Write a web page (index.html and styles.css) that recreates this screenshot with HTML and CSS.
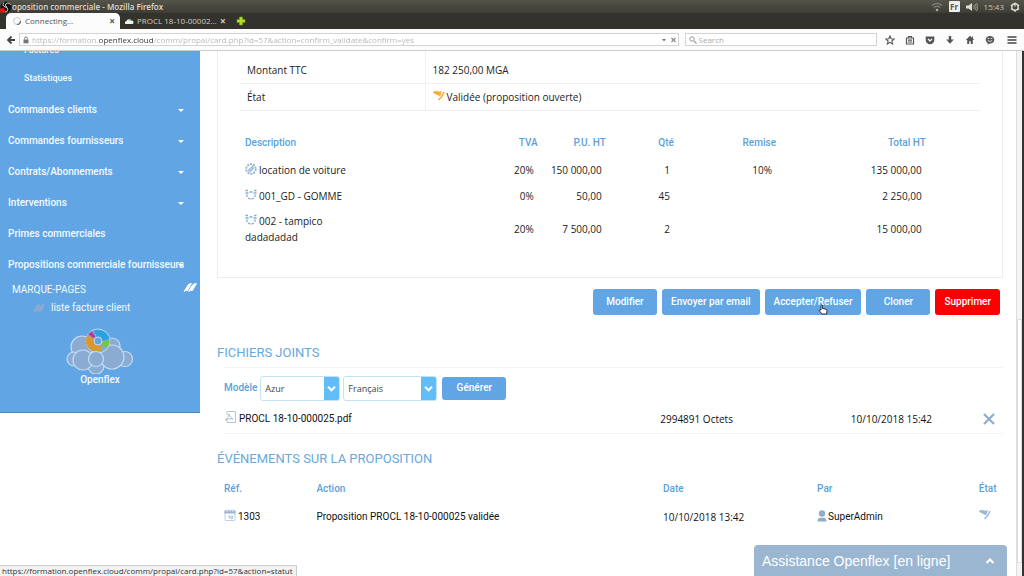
FILE: index.html
```html
<!DOCTYPE html>
<html lang="fr">
<head>
<meta charset="utf-8">
<title>Proposition commerciale</title>
<link rel="stylesheet" href="styles.css">
</head>
<body>
<header class="chrome">
  <div class="titlebar">
    <svg class="app-icon" viewBox="0 0 12 12"><circle cx="6" cy="6" r="5.5" fill="#111"/><path d="M4 1.5a2.4 2.4 0 0 0 3 4M10.500 4a2.400 2.400 0 0 0-5 1M5 11a2.400 2.400 0 0 0 .5-5" fill="none" stroke="#ccc"/><circle cx="2.500" cy="9.500" r="2.500" fill="#e11"/></svg>
    <span class="window-title">oposition commerciale - Mozilla Firefox</span>
    <div class="tray">
      <svg viewBox="0 0 12 10" width="12" height="10"><path d="M1 3.500q5-4 10 0M3 5.500q3-2.500 6 0" fill="none" stroke="#8a8983" stroke-width="1.200"/><circle cx="6" cy="8" r="1.300" fill="#aaa"/></svg>
      <span class="lang">Fr</span>
      <svg viewBox="0 0 12 10" width="12" height="10"><path d="M0 3.500h2.500L6 1v8L2.500 6.500H0z" fill="#dedcd6"/><path d="M7.500 3q1.500 2 0 4M9 2q2.500 3 0 6M10.500 1q3 4 0 8" fill="none" stroke="#aaa9a3" stroke-width=".8"/></svg>
      <time>15:43</time>
      <svg viewBox="0 0 10 10" width="10" height="10"><circle cx="5" cy="5" r="3.200" fill="none" stroke="#dedcd6" stroke-width="1.400"/><path d="M5 .5v4M.8 3l1.200.7M9.200 3L8 3.700M.8 7.500L2 6.800M9.200 7.500L8 6.800M5 8.500v1.500" stroke="#dedcd6" stroke-width="1.200"/></svg>
    </div>
  </div>
  <nav class="tabs" aria-label="Onglets">
    <div class="tab tab-active">
      <svg viewBox="0 0 10 10" width="10" height="10"><circle cx="5" cy="5" r="3.500" fill="none" stroke="#ccc"/><path d="M8.500 5A3.500 3.500 0 0 1 5 8.500" fill="none" stroke="#666" stroke-width="1.200"/></svg>
      <span class="tab-name">Connecting…</span>
      <button class="tab-close" aria-label="Fermer">×</button>
    </div>
    <div class="tab">
      <svg viewBox="0 0 10 10" width="10" height="10"><path d="M1 7.500a2 2 0 0 1 1.500-2.500 2.500 2.500 0 0 1 4.500-.5A2 2 0 0 1 9.500 6.500q0 1.500-1.500 1.500H2q-1 0-1-.5z" fill="#eef3f6"/><path d="M4 3.500a2 2 0 0 1 3 .5L5.500 5z" fill="#7cc36a"/></svg>
      <span class="tab-name">PROCL 18-10-00002…</span>
      <button class="tab-close" aria-label="Fermer">×</button>
    </div>
    <button class="tab-new" aria-label="Nouvel onglet"><svg viewBox="0 0 10 10" width="10" height="10"><path d="M3.500 1h3v2.500H9v3H6.500V9h-3V6.500H1v-3h2.500z" fill="#b5dc2a" stroke="#7fa012" stroke-width=".5"/></svg></button>
  </nav>
  <div class="navbar">
    <button class="back" aria-label="Retour"><svg viewBox="0 0 10 10" width="10" height="10"><path d="M5.500 1.500L2 5l3.500 3.500M2 5h7" fill="none" stroke="#444" stroke-width="1.800"/></svg></button>
    <div class="urlbar">
      <svg viewBox="0 0 8 8" width="8" height="8"><rect x="1.500" y="3.500" width="5" height="3.800" fill="#777"/><path d="M2.500 3.500V2.500a1.500 1.500 0 0 1 3 0v1" fill="none" stroke="#777"/></svg>
      <input class="url" aria-label="Adresse" value="https://formation.openflex.cloud/comm/propal/card.php?id=57&amp;action=confirm_validate&amp;confirm=yes">
      <svg viewBox="0 0 16 8" width="16" height="8"><path d="M1 3h4L3 5.500z" fill="#777"/><path d="M10.500 2l4 4M14.500 2l-4 4" stroke="#888" stroke-width="1.200"/></svg>
    </div>
    <div class="search">
      <svg viewBox="0 0 8 8" width="8" height="8"><circle cx="3" cy="3" r="2.200" fill="none" stroke="#999"/><path d="M4.800 4.800L7.500 7.500" stroke="#999" stroke-width="1.200"/></svg>
      <input class="search-input" aria-label="Search" placeholder="Search">
    </div>
    <div class="tools">
      <button aria-label="Favori"><svg viewBox="0 0 10 10"><path d="M5 1l1.200 2.700 3 .3-2.300 2 .7 3L5 7.400 2.400 9l.7-3L.8 4l3-.3z" fill="none" stroke="#555" stroke-width="1.100"/></svg></button>
      <button aria-label="Liste"><svg viewBox="0 0 10 10"><path d="M1.500 3h7v6h-7zM3.500 3V1.500h3V3M3 5.200h4M3 7h4" fill="none" stroke="#555" stroke-width="1.200"/></svg></button>
      <button aria-label="Pocket"><svg viewBox="0 0 10 10"><path d="M.7 1.500h8.600V5a4.300 4.300 0 0 1-8.600 0z" fill="#555"/><path d="M3 4l2 2 2-2" fill="none" stroke="#fff" stroke-width="1.200"/></svg></button>
      <button aria-label="Téléchargements"><svg viewBox="0 0 10 10"><path d="M3.800 1h2.400v3.500h2.600L5 8.800 1.200 4.500h2.600z" fill="#555"/></svg></button>
      <button aria-label="Accueil"><svg viewBox="0 0 10 10"><path d="M5 .8L.8 5h1.400v4h2V6.200h1.600V9h2V5h1.400L8 3.700V1.500H7v1.200z" fill="#555"/></svg></button>
      <button aria-label="Discussion"><svg viewBox="0 0 10 10"><path d="M5 1c2.500 0 4.300 1.500 4.300 3.700S7.500 8.500 5 8.500L2.500 9.500l.3-1.500C1.500 7.300.7 6 .7 4.700.7 2.500 2.500 1 5 1z" fill="#555"/><path d="M2.500 3.500h1.800M5.700 3.500h1.800M2.800 5.500q2.200 2 4.400 0" fill="none" stroke="#fff" stroke-width=".8"/></svg></button>
      <button aria-label="Menu" class="menu"><svg viewBox="0 0 10 10"><path d="M.5 2h9M.5 5h9M.5 8h9" stroke="#444" stroke-width="1.600"/></svg></button>
    </div>
  </div>
</header>

<div class="viewport">
  <aside class="sidebar">
    <nav class="side-nav">
      <a class="side-sub cut" href="#">Factures</a>
      <a class="side-sub" href="#">Statistiques</a>
      <a class="side-link drop" href="#">Commandes clients</a>
      <a class="side-link drop" href="#">Commandes fournisseurs</a>
      <a class="side-link drop" href="#">Contrats/Abonnements</a>
      <a class="side-link drop" href="#">Interventions</a>
      <a class="side-link" href="#">Primes commerciales</a>
      <a class="side-link drop over" href="#">Propositions commerciale fournisseurs</a>
    </nav>
    <div class="marks-head"><span>MARQUE-PAGES</span>
      <svg viewBox="0 0 14 12" width="14" height="12"><path d="M1 9.500L5 3q1-1.500 3.500-1.500L4.500 8.500Q3 8 1 9.500zM5.500 9.500L9.500 3q1-1.500 4-1.500L9.500 8.500Q7.500 8 5.500 9.500z" fill="#fff" stroke="#fff" stroke-width=".8"/></svg>
    </div>
    <a class="mark" href="#"><svg viewBox="0 0 12 10" width="12" height="10"><path d="M.5 8.500L4 2.500q1-1 3-1L4 8zM4.500 8.500l3.500-6q1-1 3.500-1L8.500 8z" fill="#8fabd0" stroke="#8fabd0" stroke-width=".6"/></svg><span>liste facture client</span></a>
    <div class="brand">
      <svg viewBox="0 0 68 46" width="68" height="46">
        <g fill="#8cabd3" stroke="#c5dcf3" stroke-width="1.200"><circle cx="16" cy="19" r="11"/><circle cx="46" cy="18" r="8"/><circle cx="30" cy="38" r="8"/><circle cx="8" cy="31" r="7"/><circle cx="59" cy="31" r="7.500"/><circle cx="17" cy="32" r="10"/><circle cx="46" cy="29" r="12"/></g>
        <circle cx="32" cy="13" r="12" fill="#78b1e4" stroke="#c5dcf3"/>
        <path d="M27.500 2.500A12 12 0 0 1 43.500 11L36 13a4 4 0 0 0-5-4z" fill="#2e9fe0"/>
        <path d="M22 6l4-2.800L29.500 9 27 10z" fill="#c0379a"/>
        <path d="M44 12a12 12 0 0 1-3 8L35 16.500l1.300-3z" fill="#7cc343"/>
        <path d="M21.500 7L28 11q-1 5 4 6.500l5 1-2 5-8 0Q16 17 21.500 7z" fill="#d69a35"/>
        <circle cx="32" cy="13" r="4" fill="#62a6e5" stroke="#c5dcf3"/>
        <circle cx="30" cy="31" r="7.500" fill="#8cabd3" stroke="#c5dcf3" stroke-width="1.200"/>
      </svg>
      <span>Openflex</span>
    </div>
  </aside>

  <main class="main">
    <section class="card">
      <table class="facts">
        <tr><th scope="row">Montant TTC</th><td>182 250,00 MGA</td></tr>
        <tr><th scope="row">État</th><td><svg class="ico" viewBox="0 0 12 11"><path d="M0 2Q2 0 4.500 1T8.500 1L7 5.500Q4 4 0 2z" fill="#f6ae2d" stroke="#f6ae2d" stroke-width=".6"/><path d="M11 1.500Q9.500 6 5.500 9.500" fill="none" stroke="#f6ae2d" stroke-width="1.600"/></svg>Validée (proposition ouverte)</td></tr>
      </table>
      <table class="lines">
        <colgroup><col class="c-desc"><col class="c-tva"><col class="c-pu"><col class="c-qty"><col class="c-rem"><col class="c-tot"></colgroup>
        <thead><tr><th>Description</th><th>TVA</th><th>P.U. HT</th><th>Qté</th><th>Remise</th><th>Total HT</th></tr></thead>
        <tbody>
          <tr><td><svg class="ico" viewBox="0 0 12 12"><circle cx="6" cy="6" r="4.800" fill="none" stroke="#8fb2d6" stroke-width="1.800" stroke-dasharray="2 1"/><path d="M3 8l5-5M4.500 9l4.500-4.500" stroke="#8fb2d6" stroke-width="1.200"/></svg>location de voiture</td><td>20%</td><td>150 000,00</td><td>1</td><td>10%</td><td>135 000,00</td></tr>
          <tr><td><svg class="ico" viewBox="0 0 12 12"><path d="M.5 1.500h2.500M9 1.500h2.500M.5 4h3M8.500 4h3M4.500 3h3M2 5.500v2.500M10 5.500v2.500M3 9l2.500 1.200M9 9l-2.500 1.200" fill="none" stroke="#86acd3" stroke-width="1.300"/></svg>001_GD - GOMME</td><td>0%</td><td>50,00</td><td>45</td><td></td><td>2 250,00</td></tr>
          <tr class="tall"><td><svg class="ico" viewBox="0 0 12 12"><path d="M.5 1.500h2.500M9 1.500h2.500M.5 4h3M8.500 4h3M4.500 3h3M2 5.500v2.500M10 5.500v2.500M3 9l2.500 1.200M9 9l-2.500 1.200" fill="none" stroke="#86acd3" stroke-width="1.300"/></svg>002 - tampico<br>dadadadad</td><td>20%</td><td>7 500,00</td><td>2</td><td></td><td>15 000,00</td></tr>
        </tbody>
      </table>
    </section>

    <div class="actions">
      <button class="btn">Modifier</button>
      <button class="btn">Envoyer par email</button>
      <button class="btn hovered">Accepter/Refuser<svg class="pointer" viewBox="0 0 10 11" width="10" height="11"><path d="M3 6V1.500q1-1 1.500 0V4.500l3.500.7q1 .2 1 1.300L8.500 10H4L1 6.500q1-1 2-.5z" fill="#fff" stroke="#222" stroke-width=".9"/></svg></button>
      <button class="btn">Cloner</button>
      <button class="btn btn-danger">Supprimer</button>
    </div>

    <h2>FICHIERS JOINTS</h2>
    <section class="files">
      <form class="generate">
        <label for="model">Modèle</label>
        <select id="model" class="pick"><option>Azur</option></select>
        <select class="pick pick-wide" aria-label="Langue"><option>Français</option></select>
        <button type="button" class="btn btn-small">Générer</button>
      </form>
      <div class="file">
        <a class="file-name" href="#"><svg class="ico" viewBox="0 0 12 12"><path d="M3 .5h8.500v11H3V9M3 .5v3.500" fill="none" stroke="#b9c3cd"/><path d="M1 9q4-2 4-6 1 4 4 5-4-1-8 1z" fill="none" stroke="#9fb3c6" stroke-width=".8"/></svg>PROCL 18-10-000025.pdf</a>
        <span class="size">2994891 Octets</span>
        <time class="stamp">10/10/2018 15:42</time>
        <button class="remove" aria-label="Supprimer le fichier"><svg viewBox="0 0 12 12" width="12" height="12"><path d="M1 1l10 10M11 1L1 11" stroke="#8fadce" stroke-width="2.200"/></svg></button>
      </div>
    </section>

    <h2>ÉVÉNEMENTS SUR LA PROPOSITION</h2>
    <table class="events">
      <colgroup><col class="e-ref"><col class="e-act"><col class="e-date"><col class="e-by"><col></colgroup>
      <thead><tr><th>Réf.</th><th>Action</th><th>Date</th><th>Par</th><th>État</th></tr></thead>
      <tbody><tr>
        <td><svg class="ico" viewBox="0 0 12 12"><rect x="1" y="1.500" width="10" height="10" rx="1" fill="#fff" stroke="#c3d0de"/><path d="M.5 1.500h11v3H.5z" fill="#9ab5d3"/><path d="M3 0v3M6 0v3M9 0v3" stroke="#dfe9f3"/><path d="M4 7h1.500v2.500M7 7h1.500v2.500H7z" fill="none" stroke="#9ab5d3" stroke-width=".8"/></svg>1303</td>
        <td>Proposition PROCL 18-10-000025 validée</td>
        <td class="narrow">10/10/2018 13:42</td>
        <td><svg class="user" viewBox="0 0 10 12" width="10" height="12"><circle cx="5" cy="3.500" r="3.200" fill="#8fadca"/><path d="M.5 11.500q0-3.500 3-3.800h3q3 .3 3 3.800z" fill="#8fadca"/></svg>SuperAdmin</td>
        <td><svg class="ico" viewBox="0 0 12 11"><path d="M0 2Q2 0 4.500 1T8.500 1L7 5.500Q4 4 0 2z" fill="#9ab5d6" stroke="#9ab5d6" stroke-width=".6"/><path d="M11 1.500Q9.500 6 5.500 9.500" fill="none" stroke="#9ab5d6" stroke-width="1.400"/></svg></td>
      </tr></tbody>
    </table>
  </main>
  <div class="scroll"><div class="thumb"></div></div>
  <button class="chat"><span>Assistance Openflex [en ligne]</span><svg viewBox="0 0 10 8" width="10" height="8"><path d="M1.500 6L5 2.500 8.500 6" fill="none" stroke="#fff" stroke-width="2"/></svg></button>
  <div class="status">https://formation.openflex.cloud/comm/propal/card.php?id=57&amp;action=statut</div>
</div>
</body>
</html>
```
FILE: styles.css
```css
* { box-sizing: border-box; }
body {
  margin: 0;
  height: 100vh;
  display: flex;
  flex-direction: column;
  overflow: hidden;
  background: #fff;
  color: #222;
  font: 10px/16px "Open Sans", sans-serif;
}
button, input, select { font: inherit; color: inherit; margin: 0; padding: 0; border: 0; background: none; }
a { color: inherit; text-decoration: none; }
svg { flex: none; display: block; }
table { border-collapse: collapse; table-layout: fixed; width: 100%; }
th, td { padding: 0; text-align: left; font-weight: 400; }

/* Browser chrome */
.chrome { flex: none; font: 8px/12px "Open Sans", sans-serif; background: #34322d; }
.titlebar { display: flex; align-items: center; height: 13px; padding-right: 4px; background: linear-gradient(#55544a, #3d3c36); }
.app-icon { width: 12px; height: 12px; }
.window-title { flex: 1; color: #dfdbd2; font-weight: 600; }
.tray { display: flex; align-items: center; gap: 6px; color: #c9c7c0; }
.lang { width: 11px; line-height: 11px; text-align: center; background: #eee; color: #555; font-weight: 700; border-radius: 1px; }
.tabs { display: flex; height: 16px; padding-left: 6px; }
.tab { display: flex; align-items: center; gap: 3px; width: 110px; padding: 0 4px 0 4px; color: #cfccc4; }
.tab-active { width: 114px; padding-left: 6px; background: #fcfcfc; color: #555; border-radius: 5px 5px 0 0; }
.tab-name { flex: 1; white-space: nowrap; }
.tab-close { width: 8px; font-weight: 700; font-size: 10px; line-height: 10px; }
.tab-new { margin-left: 6px; }
.navbar { display: flex; align-items: center; gap: 6px; height: 22px; padding: 0 7px 0 4px; background: #fcfcfc; border-bottom: 1px solid #ccc; }
.back { width: 14px; height: 14px; display: grid; place-items: center; }
.urlbar, .search { display: flex; align-items: center; gap: 2px; height: 13px; border: 1px solid #d3d3d3; background: #fff; }
.urlbar { flex: 1; margin-left: -5px; padding: 0 1px 0 2px; }
.url {
  flex: 1;
  min-width: 0;
  line-height: 11px;
  background: linear-gradient(90deg, #b4b4b4 66px, #333 66px, #333 121px, #b4b4b4 121px);
  background-clip: text;
  -webkit-background-clip: text;
  -webkit-text-fill-color: transparent;
}
.search { width: 19%; padding: 0 3px; }
.search-input { width: 100%; line-height: 11px; }
.search-input::placeholder { color: #aaa; }
.tools { display: flex; gap: 10px; padding-left: 2px; }
.tools button { width: 10px; height: 10px; }
.tools .menu { margin-left: 2px; }

/* Page */
.viewport { position: relative; flex: 1; min-height: 0; display: flex; align-items: flex-start; overflow: hidden; }
.sidebar { flex: none; width: 200px; padding-bottom: 26px; background: #61a5e4; border-bottom: 1px solid #4e8cc8; color: #f4faff; font-family: Roboto, sans-serif; overflow: hidden; }
.side-nav { display: flex; flex-direction: column; font-weight: 500; font-size: 10px; }
.side-sub { padding: 8px 24px; font-size: 9px; }
.side-sub.cut { margin-top: -17px; padding-bottom: 4px; }
.side-link { display: flex; align-items: center; justify-content: space-between; padding: 8px 16px 7px 8px; white-space: nowrap; }
.drop::after { content: ""; border: 3px solid transparent; border-top-color: #fff; border-bottom: 0; }
.over::after { margin-left: -12px; }
.marks-head { display: flex; justify-content: space-between; padding: 2px 3px 0 12px; }
.mark { display: flex; align-items: center; gap: 6px; padding: 2px 33px; }
.brand { display: flex; flex-direction: column; align-items: center; padding-top: 10px; font-weight: 500; line-height: 12px; }

.main { flex: 1; min-width: 0; padding: 0 13px 0 17px; font-family: Roboto, sans-serif; }
.card { padding: 0 22px 28px; border: 1px solid #ededed; border-top: 0; font-family: "Open Sans", sans-serif; }
.facts tr { border-bottom: 1px solid #f0f0f0; }
.facts th, .facts td { height: 27px; padding-left: 7px; vertical-align: middle; }
.facts tr:first-child th, .facts tr:first-child td { height: 32px; padding-top: 6px; }
.facts th { width: 25%; border-right: 1px solid #f0f0f0; }
.ico { display: inline-block; width: 12px; height: 12px; margin-right: 2px; vertical-align: -1px; }
.lines { margin: 20px 0 0 5px; width: 92%; }
.lines th { height: 26px; padding-bottom: 2px; color: #5aa2d8; font-family: Roboto, sans-serif; font-weight: 500; }
.lines td { height: 26px; padding-right: 4px; }
.lines .tall td { height: 40px; }
.lines th:not(:first-child), .lines td:not(:first-child) { text-align: right; }
.c-desc { width: 36%; }
.c-tva { width: 7%; }
.c-pu { width: 10%; }
.c-qty { width: 10%; }
.c-rem { width: 15%; }
.c-tot { width: 22%; }

.actions { display: flex; justify-content: flex-end; gap: 5px; padding: 11px 3px 0 0; }
.btn { min-width: 64px; height: 26px; padding: 0 9px; border-radius: 3px; background: #61a5e4; color: #fff; font: 500 10px/16px Roboto, sans-serif; }
.actions .btn-danger { background: #fb0000; }
.hovered { position: relative; }
.pointer { position: absolute; left: 53px; top: 15px; }

h2 { margin: 28px 0 0; color: #66a9dc; font: 400 13px/20px Roboto, sans-serif; }
.files { margin-left: 7px; border-top: 1px solid #f4f4f4; border-bottom: 1px solid #f4f4f4; margin-top: 4px; }
.generate { display: flex; align-items: center; gap: 3px; padding-top: 8px; }
.generate label { color: #5aa2d8; font-weight: 500; }
.pick {
  appearance: none;
  width: 80px;
  height: 25px;
  padding: 0 19px 0 4px;
  border: 1px solid #c5e2f1;
  border-radius: 3px;
  color: #444;
  font: 9px "Open Sans", sans-serif;
  background: url("data:image/svg+xml,%3Csvg xmlns='http://www.w3.org/2000/svg' viewBox='0 0 15 24'%3E%3Cpath d='M0 0h15v24H0z' fill='%2360bdf8'/%3E%3Cpath d='M4 10l3.500 3.500L11 10' fill='none' stroke='%23fff' stroke-width='2'/%3E%3C/svg%3E") right center / 15px 24px no-repeat #fff;
}
.pick-wide { width: 94px; }
.btn-small { height: 23px; margin-left: 2px; }
.file { display: grid; grid-template-columns: 56% 1fr auto 36px; align-items: center; height: 32px; color: #111; padding-top: 4px; }
.file-name { font-size: 10px; }
.file-name .ico { margin-right: 3px; }
.size, .stamp, .narrow { font: 10px/16px "Open Sans", sans-serif; }
.stamp { margin-right: 35px; }
.remove { width: 12px; height: 12px; margin-left: 16px; }
.files + h2 { margin-top: 15px; }
.events { margin: 8px 0 0 7px; width: 98%; color: #111; font-size: 10px; }
.events th { height: 25px; color: #5aa2d8; font-weight: 500; }
.events td { height: 30px; white-space: nowrap; }
.events th:last-child { text-align: left; }
.e-ref { width: 12%; }
.e-act { width: 45%; }
.e-date { width: 20%; }
.e-by { width: 21%; }
.events th:last-child, .events td:last-child { overflow: visible; }
.user { display: inline-block; margin-right: 1px; vertical-align: -2px; }

.scroll { align-self: stretch; width: 8px; padding-top: 268px; border-left: 1px solid #ddd; border-right: 2px solid #333; background: #f4f4f4; }
.thumb { height: 244px; border: 1px solid #ddd; background: #fff; }
.chat { position: absolute; right: 17px; bottom: 0; width: 253px; height: 31px; padding: 0 12px 0 8px; display: flex; align-items: center; justify-content: space-between; border-radius: 4px 4px 0 0; background: #9bb6d1; color: #fff; font: 14px/20px "Liberation Sans", sans-serif; }
.status { position: absolute; left: 0; bottom: 0; padding: 0 3px 0 2px; border: 1px solid #ccc; border-width: 1px 1px 0 0; background: #f2f2f2; color: #333; font: 8px/10px "Open Sans", sans-serif; }
```
